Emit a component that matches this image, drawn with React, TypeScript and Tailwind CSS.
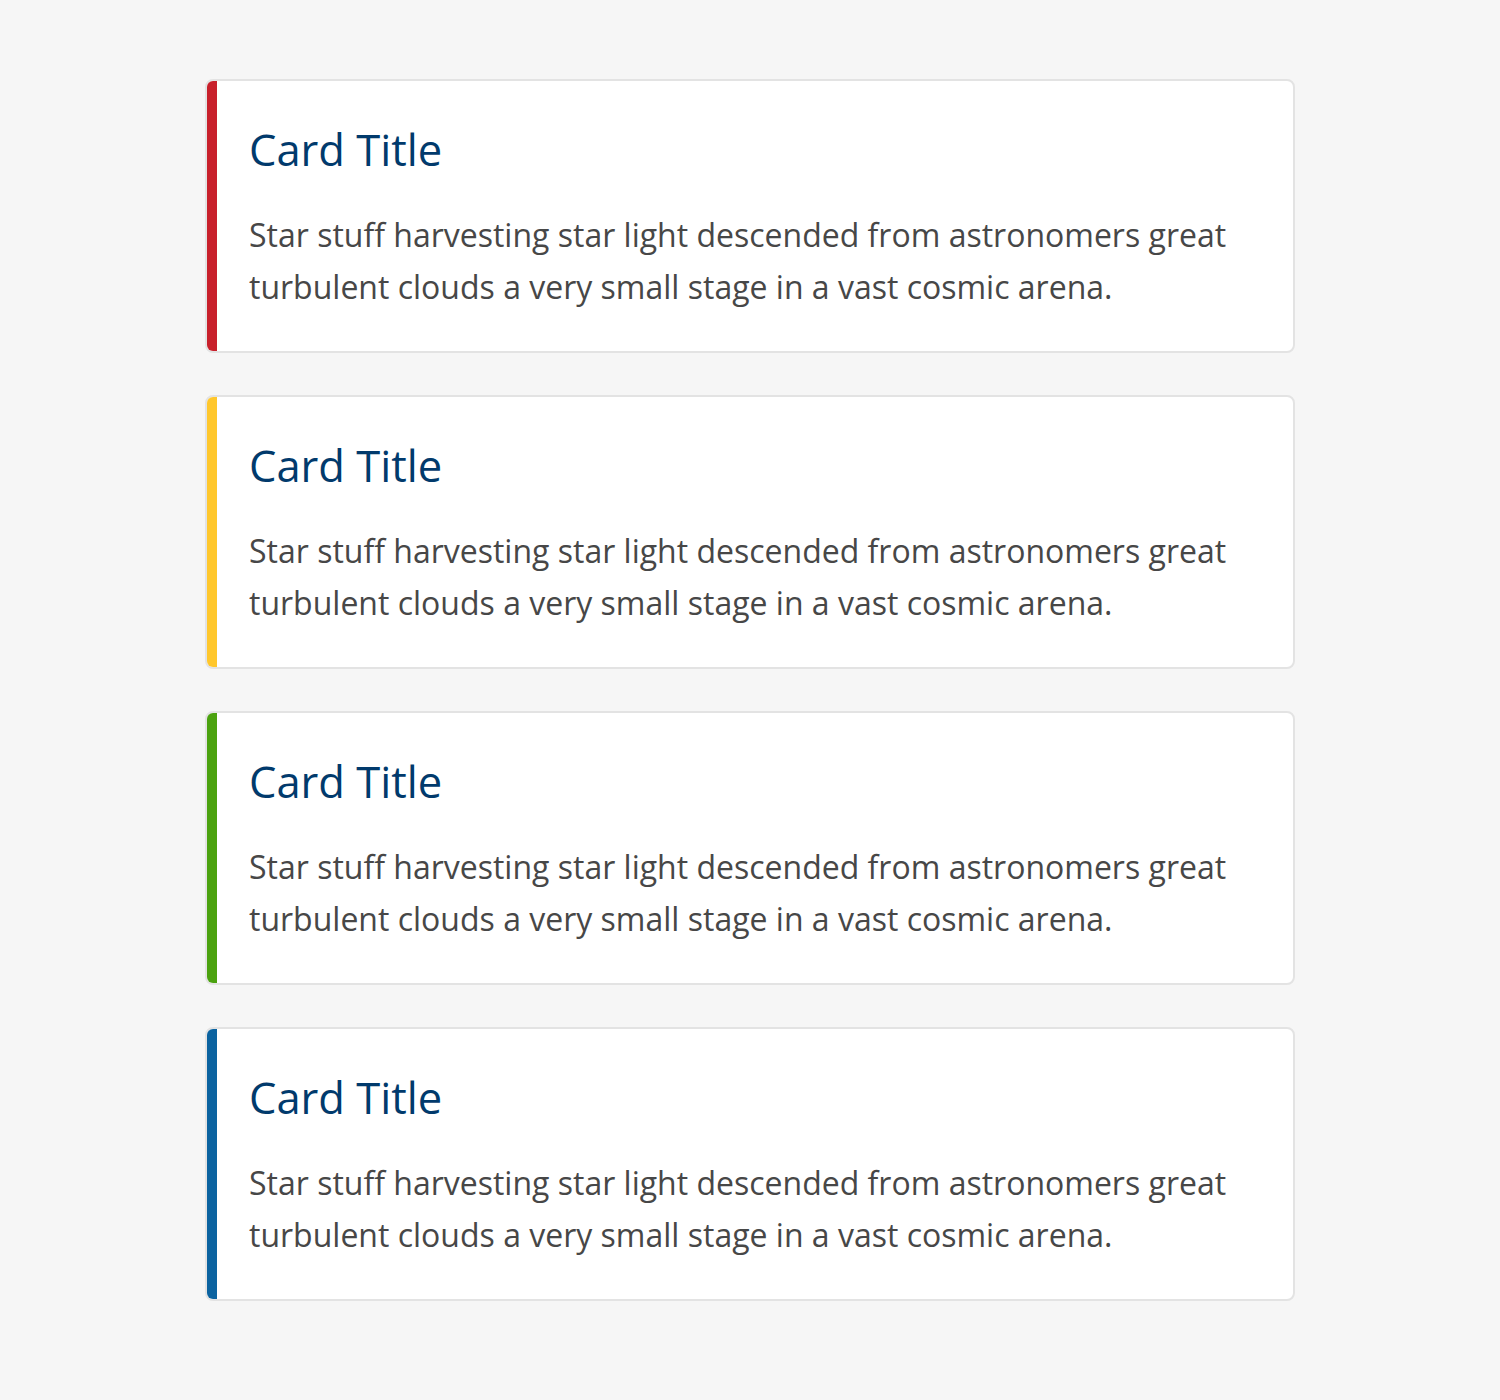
const cards = [
  { id: 1, accent: "bg-[#c8202b]" },
  { id: 2, accent: "bg-[#ffc72c]" },
  { id: 3, accent: "bg-[#4ba20f]" },
  { id: 4, accent: "bg-[#0b63a0]" },
];

function Card({ accent }: { accent: string }) {
  return (
    <div className="flex bg-white border-2 border-[#e3e3e3] rounded-[8px] overflow-hidden h-[274px]">
      <div className={`w-[10px] shrink-0 ${accent}`} />
      <div className="flex-1 pl-[32px] pr-[40px] pt-[44px]">
        <h2 className="text-[43.5px] leading-[50px] text-[#013a6c]">Card Title</h2>
        <p className="mt-[34px] text-[32px] leading-[52px] text-[#474747]">
          Star stuff harvesting star light descended from astronomers great
          turbulent clouds a very small stage in a vast cosmic arena.
        </p>
      </div>
    </div>
  );
}

export default function App() {
  return (
    <div
      className="min-h-[1400px] bg-[#f6f6f6] pt-[79px]"
      style={{ fontFamily: '"Open Sans", sans-serif' }}
    >
      <div className="w-[1090px] mx-auto flex flex-col gap-[42px]">
        {cards.map((c) => (
          <Card key={c.id} accent={c.accent} />
        ))}
      </div>
    </div>
  );
}
